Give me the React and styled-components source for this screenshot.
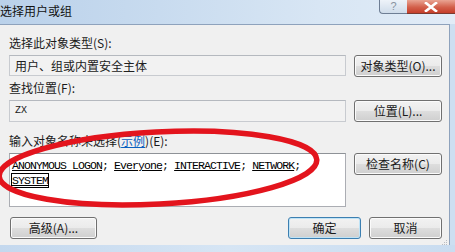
import styled, { createGlobalStyle } from "styled-components";

const GlobalStyle = createGlobalStyle`
  html, body {
    margin: 0;
    padding: 0;
    background: #cddff1;
    overflow: hidden;
  }
`;

const cjk = `"Noto Sans CJK SC", "Noto Sans", sans-serif`;

export default function App() {
  const names = ["ANONYMOUS LOGON", "Everyone", "INTERACTIVE", "NETWORK"];

  return (
    <>
      <GlobalStyle />
      <Window>
        <TitleBar>
          <Title>选择用户或组</Title>
          <CaptionButtons>
            <HelpButton>?</HelpButton>
            <CloseButton>
              <svg width="14" height="10" viewBox="0 0 14 10">
                <path d="M2 1 L12 9 M12 1 L2 9" stroke="#fff" strokeWidth="2.6" strokeLinecap="square" />
              </svg>
            </CloseButton>
          </CaptionButtons>
        </TitleBar>

        <Client>
          <Label $top={10}>选择此对象类型(S):</Label>
          <Row>
            <Field $height={21}>用户、组或内置安全主体</Field>
            <Button>对象类型(O)...</Button>
          </Row>

          <Label $top={3}>查找位置(F):</Label>
          <Row>
            <Field $height={22} $mono>ZX</Field>
            <Button>位置(L)...</Button>
          </Row>

          <Label $top={11}>
            输入对象名称来选择(<Link>示例</Link>)(E):
          </Label>
          <Row>
            <NameBox>
              {names.map((n) => (
                <span key={n}>
                  <Name>{n}</Name>;{" "}
                </span>
              ))}
              <br />
              <Name $boxed>SYSTEM</Name>
            </NameBox>
            <Button>检查名称(C)</Button>
          </Row>

          <Footer>
            <Button $width={87}>高级(A)...</Button>
            <Spacer />
            <Button $width={73} $default>确定</Button>
            <Button $width={73}>取消</Button>
          </Footer>
          <Grip>
            <svg width="10" height="10" viewBox="0 0 10 10">
              <g fill="#b8bcc2">
                <rect x="8" y="2" width="1" height="1" />
                <rect x="6" y="4" width="1" height="1" />
                <rect x="8" y="4" width="1" height="1" />
                <rect x="4" y="6" width="1" height="1" />
                <rect x="6" y="6" width="1" height="1" />
                <rect x="8" y="6" width="1" height="1" />
              </g>
            </svg>
          </Grip>
        </Client>

        <BottomFrame />

        <Annotation width="455" height="252" viewBox="0 0 455 252">
          <ellipse
            cx="158"
            cy="168"
            rx="159"
            ry="36"
            transform="rotate(-3 158 168)"
            fill="none"
            stroke="#e3141d"
            strokeWidth="5.5"
          />
        </Annotation>
      </Window>
    </>
  );
}

const Window = styled.div`
  position: relative;
  width: 455px;
  height: 252px;
  display: flex;
  flex-direction: column;
  font-family: ${cjk};
  font-size: 12px;
  color: #000;
`;

const TitleBar = styled.div`
  height: 24px;
  display: flex;
  justify-content: space-between;
  align-items: flex-start;
  background: linear-gradient(to right, #bad1ea 0%, #c8dbef 35%, #d8e6f4 70%, #e2ecf7 100%);
`;

const Title = styled.div`
  padding: 2px 0 0 0;
  font-size: 12px;
  line-height: 17px;
  color: #111;
`;

const CaptionButtons = styled.div`
  display: flex;
  height: 14px;
`;

const HelpButton = styled.div`
  width: 27px;
  height: 13px;
  border: 1px solid #6e7e94;
  border-top: none;
  border-right: none;
  border-radius: 0 0 0 4px;
  background: linear-gradient(#eef3f9, #cfdcea);
  color: #8892a0;
  font-family: "Liberation Sans", sans-serif;
  font-size: 11px;
  line-height: 12px;
  text-align: center;
`;

const CloseButton = styled.div`
  width: 48px;
  height: 13px;
  border-bottom: 1px solid #7a3a30;
  background: linear-gradient(#e9a493, #d3604b 55%, #c53e2a);
  display: flex;
  justify-content: center;
  align-items: center;
`;

const Client = styled.div`
  position: relative;
  flex: 1;
  margin-right: 5px;
  padding: 0 0 0 9px;
  background: #f0f0f0;
  border-top: 1px solid #8ea2bc;
  border-right: 1px solid #8ea2bc;
  display: flex;
  flex-direction: column;
`;

const Label = styled.div`
  margin-top: ${(p) => p.$top}px;
  margin-bottom: 4px;
  height: 16px;
  line-height: 16px;
  color: #1a1a1a;
`;

const Link = styled.span`
  color: #0b5fbf;
  text-decoration: underline;
`;

const Row = styled.div`
  display: flex;
  gap: 8px;
  align-items: flex-start;
`;

const Field = styled.div`
  box-sizing: border-box;
  width: 337px;
  height: ${(p) => p.$height}px;
  padding: 0 5px;
  border: 1px solid #c8cbd0;
  border-top-color: #b5b9bf;
  background: #f2f2f2;
  color: #202020;
  line-height: ${(p) => p.$height - 2}px;
  font-family: ${(p) => (p.$mono ? `"Liberation Mono", monospace` : cjk)};
  font-size: ${(p) => (p.$mono ? "10px" : "12px")};
`;

const NameBox = styled.div`
  box-sizing: border-box;
  width: 337px;
  height: 54px;
  padding: 4px 2px;
  border: 1px solid #abadb3;
  border-top-color: #8e9297;
  background: #fff;
  font-family: "Liberation Mono", monospace;
  font-size: 11.5px;
  letter-spacing: -0.9px;
  line-height: 15px;
  color: #000;
  white-space: nowrap;
`;

const Name = styled.span`
  text-decoration: underline;
  outline: ${(p) => (p.$boxed ? "1px solid #000" : "none")};
`;

const Button = styled.button`
  box-sizing: border-box;
  width: ${(p) => p.$width || 88}px;
  height: 22px;
  margin: 0;
  padding: 0;
  border: 1px solid ${(p) => (p.$default ? "#3c7fb1" : "#707070")};
  border-radius: 3px;
  background: linear-gradient(#f2f2f2 0%, #ebebeb 48%, #dddddd 52%, #cfcfcf 100%);
  box-shadow: inset 0 0 0 1px ${(p) => (p.$default ? "#bfe3f6" : "#fbfbfb")};
  font-family: ${cjk};
  font-size: 12px;
  line-height: 18px;
  color: #1a1a1a;
`;

const Footer = styled.div`
  display: flex;
  gap: 8px;
  width: 433px;
  margin-top: 10px;
  padding-left: 1px;
  box-sizing: border-box;
`;

const Spacer = styled.div`
  flex: 1;
`;

const Grip = styled.div`
  position: absolute;
  right: 1px;
  bottom: 1px;
  width: 10px;
  height: 10px;
`;

const BottomFrame = styled.div`
  height: 7px;
  background: linear-gradient(to right, #c4d8ee, #d6e5f4 50%, #c9dcf0);
`;

const Annotation = styled.svg`
  position: absolute;
  left: 0;
  top: 0;
  pointer-events: none;
`;
